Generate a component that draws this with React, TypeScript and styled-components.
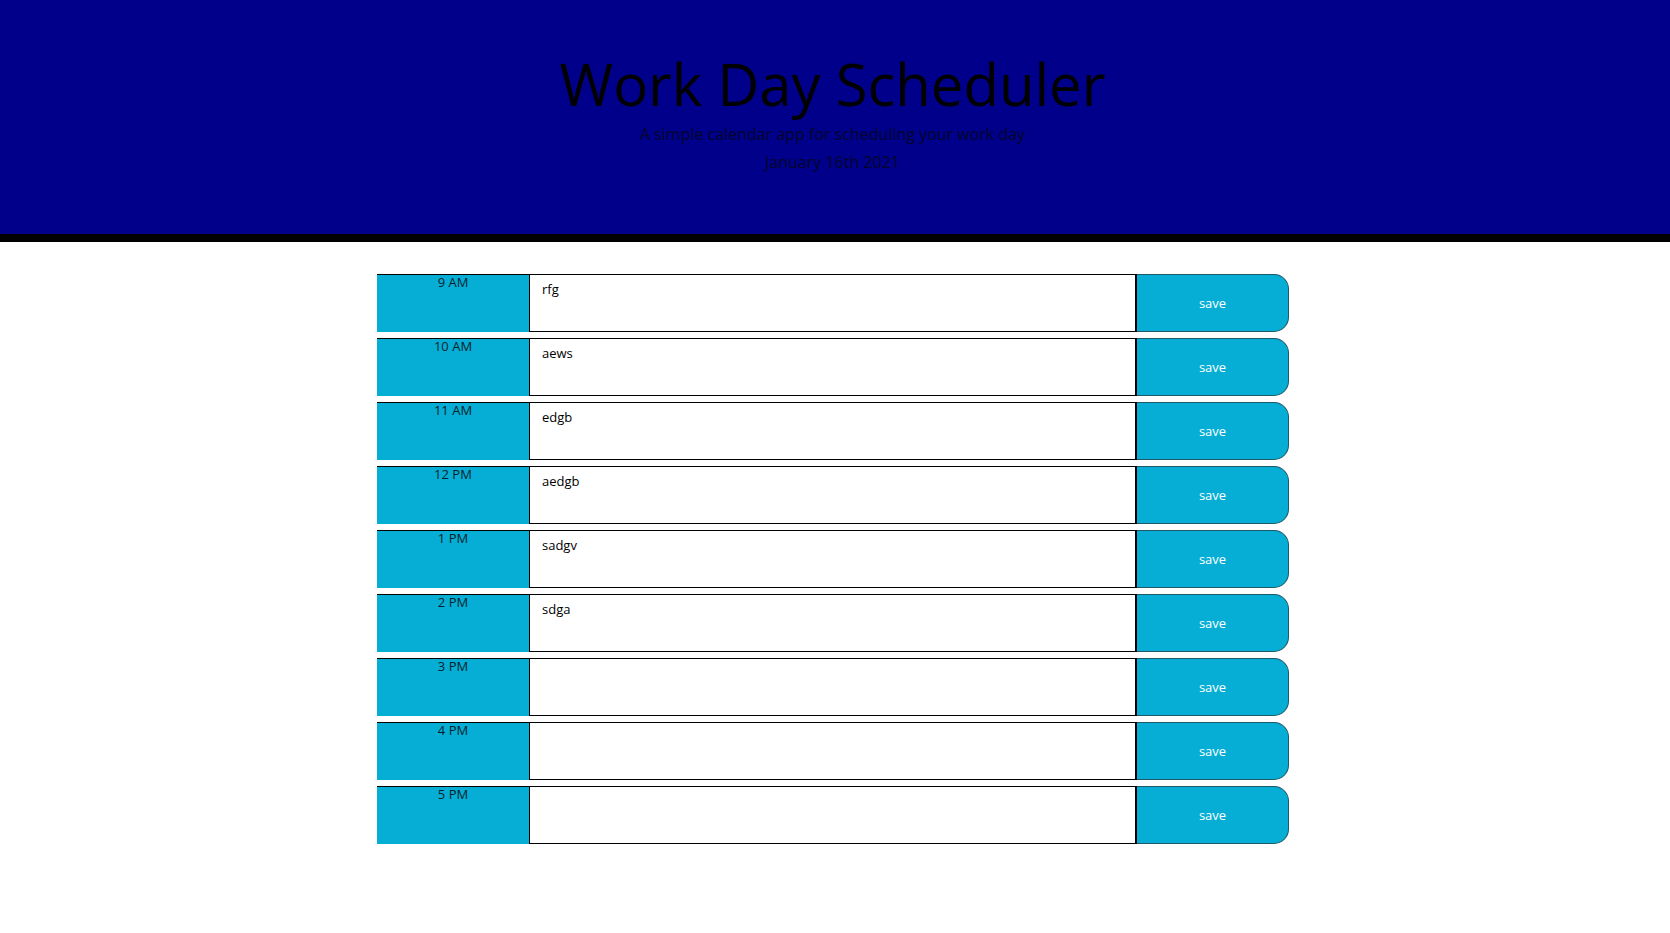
import React from "react";
import styled, { createGlobalStyle } from "styled-components";

const GlobalStyle = createGlobalStyle`
  html, body {
    margin: 0;
    padding: 0;
    background: #ffffff;
    font-family: "Open Sans", "Liberation Sans", sans-serif;
    font-size: 16px;
    line-height: 1;
    color: #000;
  }
  * { box-sizing: border-box; }
`;

const Header = styled.header`
  background: #00008b;
  border-bottom: 8px solid #000;
  height: 242px;
  padding: 49px 5px 0 0;
  text-align: center;
  color: #000;
`;

const Title = styled.h1`
  margin: 0 0 7px;
  font-size: 58px;
  font-weight: 400;
  line-height: 1.2;
  color: #000;
`;

const Lead = styled.p<{ $gap?: number }>`
  margin: 0 0 ${(p) => p.$gap ?? 0}px;
  font-size: 16px;
  font-weight: 400;
  line-height: 1;
  color: #05052a;
`;

const Schedule = styled.main`
  width: 912px;
  margin: 32px 0 0 calc(50% - 458px);
  display: flex;
  flex-direction: column;
  gap: 6px;
`;

const Row = styled.div`
  display: grid;
  grid-template-columns: 152px 1fr 152px;
  height: 58px;
`;

const Hour = styled.div`
  background: #06aed5;
  border-top: 1px solid #000;
  color: #05222c;
  font-size: 13px;
  line-height: 1;
  text-align: center;
  padding-top: 1px;
`;

const Description = styled.textarea`
  font-family: "Open Sans", "Liberation Sans", sans-serif;
  font-size: 13px;
  line-height: 1;
  color: #000;
  background: #fff;
  border: 1px solid #000;
  border-right-width: 2px;
  padding: 8px 12px;
  resize: none;
  margin: 0;
  height: 58px;
  outline: none;
`;

const SaveButton = styled.button`
  background: #06aed5;
  color: #fff;
  font-family: "Open Sans", "Liberation Sans", sans-serif;
  font-size: 13px;
  border: 1px solid #1f5868;
  border-left: none;
  border-top-right-radius: 15px;
  border-bottom-right-radius: 15px;
  margin: 0;
  padding: 0;
  cursor: pointer;
`;

const hours: { label: string; text: string }[] = [
  { label: "9 AM", text: "rfg" },
  { label: "10 AM", text: "aews" },
  { label: "11 AM", text: "edgb" },
  { label: "12 PM", text: "aedgb" },
  { label: "1 PM", text: "sadgv" },
  { label: "2 PM", text: "sdga" },
  { label: "3 PM", text: "" },
  { label: "4 PM", text: "" },
  { label: "5 PM", text: "" },
];

export default function App() {
  return (
    <>
      <GlobalStyle />
      <Header>
        <Title>Work Day Scheduler</Title>
        <Lead $gap={12}>A simple calendar app for scheduling your work day</Lead>
        <Lead>January 16th 2021</Lead>
      </Header>
      <Schedule>
        {hours.map((h) => (
          <Row key={h.label}>
            <Hour>{h.label}</Hour>
            <Description defaultValue={h.text} />
            <SaveButton>save</SaveButton>
          </Row>
        ))}
      </Schedule>
    </>
  );
}
